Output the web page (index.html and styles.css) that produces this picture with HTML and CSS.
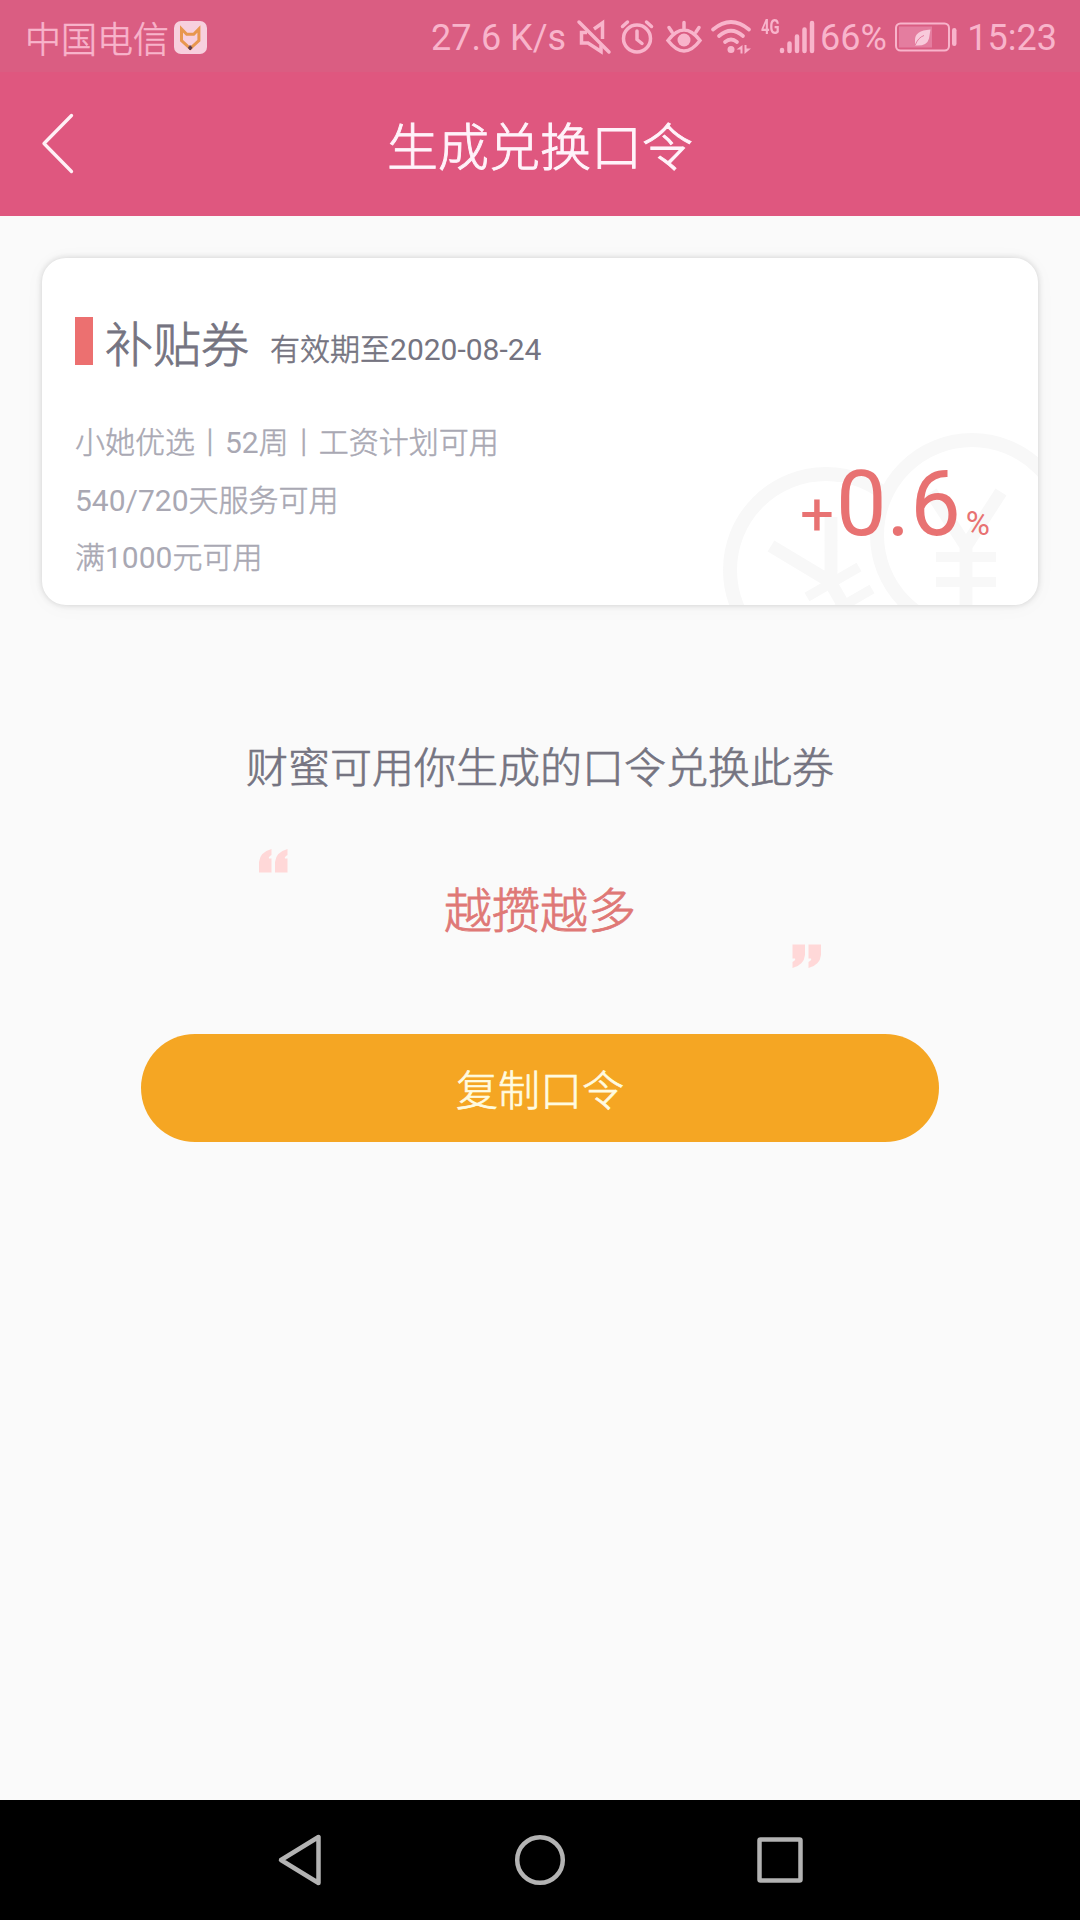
FILE: index.html
```html
<!DOCTYPE html>
<html lang="zh-CN">
<head>
<meta charset="utf-8">
<title>生成兑换口令</title>
<link rel="stylesheet" href="styles.css">
</head>
<body>
<div class="screen">
  <div class="status">
    <span class="carrier">中国电信</span>
    <svg class="fox" width="33" height="33" viewBox="0 0 33 33"><rect width="33" height="33" rx="7" fill="#f7d0de"/><path d="M7.500 8v11.500l8.700 8 8.700-8V8l-5.200 5.300h-7z" fill="none" stroke="#e8974f" stroke-width="3"/><path d="M16.200 24.500v4.500M14.200 26.800h4" stroke="#5b3d4c" stroke-width="2"/></svg>
    <span class="speed">27.6 K/s</span>
    <svg class="mute" width="34" height="34" viewBox="0 0 34 34" fill="none" stroke="#f8b4cb" stroke-width="3.500"><path d="M2 2l30 30" stroke-linecap="round"/><path d="M10 12.500H4.500v10.500H11l13 8.500V25M17 9l8.500-6v16"/></svg>
    <svg class="alarm" width="34" height="34" viewBox="0 0 34 34" fill="none" stroke="#f8b4cb" stroke-width="3.500" stroke-linecap="round"><circle cx="17" cy="18.500" r="13.500"/><path d="M17 11v8.500l5 4M2.500 6.500l5-4.500M31.500 6.500l-5-4.500"/></svg>
    <svg class="eye" width="36" height="34" viewBox="0 0 36 34" fill="none" stroke="#f8b4cb" stroke-width="3.500" stroke-linecap="round"><path d="M2 20.500q16-21 32 0q-16 21-32 0zM18 10V2.500M6 12L3 7.500M30 12l3-4.500"/><circle cx="18" cy="20" r="6.500" fill="#f8b4cb" stroke="none"/></svg>
    <svg class="wifi" width="41" height="34" viewBox="0 0 41 34" fill="none" stroke="#f8b4cb" stroke-width="3.700" stroke-linecap="round"><path d="M2 9.500q18-15 36 0M8 16q12-10.500 24 0M14 22q6-5 12 0"/><circle cx="20" cy="29.500" r="3.500" fill="#f8b4cb" stroke="none"/><path d="M25.500 29.500l6-4.500v8.500h-2v-4zM33.500 25h2v3.500H40L33.500 34z" fill="#f8b4cb" stroke="none"/></svg>
    <span class="net">4G</span>
    <svg class="signal" width="36" height="34" viewBox="0 0 36 34" stroke="#f8b4cb" stroke-width="4.500" stroke-linecap="round"><path d="M3 30v1M10.500 23.500V31M18 16.500V31M25.500 9.500V31M33 3V31"/></svg>
    <span class="percent">66%</span>
    <svg class="battery" width="62" height="30" viewBox="0 0 62 30"><rect x="1" y="1.500" width="53" height="27" rx="4.500" fill="none" stroke="#f8b4cb" stroke-width="2"/><rect x="4" y="4.500" width="33" height="21" fill="#e47d9f"/><path d="M35.500 7.500q-16 1-15.500 11v5q12 1 14-7z" fill="#f8cadb"/><path d="M20 23.500q3-8 9-10" stroke="#e47d9f" fill="none"/><rect x="57" y="6" width="4.500" height="18" rx="2.200" fill="#f8b4cb"/></svg>
    <span class="time">15:23</span>
  </div>
  <header class="header">
    <svg class="back" width="32" height="60" viewBox="0 0 32 60"><path d="M29.500 1.500L2 29.500l27.500 28" fill="none" stroke="#fff0f6" stroke-width="3.300" stroke-linecap="round" stroke-linejoin="round"/></svg>
    <h1 class="title">生成兑换口令</h1>
  </header>
  <main class="content">
    <section class="coupon">
      <svg class="coins" width="320" height="176" viewBox="0 0 320 176" fill="none" stroke="#f8f8f8" stroke-width="13">
        <mask id="behind"><rect width="320" height="240" fill="#fff"/><circle cx="254" cy="106" r="102" fill="#000"/></mask>
        <circle cx="108" cy="141" r="96" stroke-width="14" mask="url(#behind)"/>
        <circle cx="254" cy="106" r="95" stroke-width="14"/>
        <path d="M283 63l-35 54-35-54M248 114v66"/>
        <path d="M218 128h60M218 153h60" stroke-width="10"/>
        <path d="M53 117l60 36V88M111 151l19 33"/>
        <path d="M89 168l52-30M102 190l52-30" stroke-width="10"/>
      </svg>
      <div class="heading">
        <i class="marker"></i>
        <span class="name">补贴券</span>
        <span class="expiry">有效期至<span class="num">2020-08-24</span></span>
      </div>
      <div class="details">
        <ul class="terms">
          <li>小她优选丨<span class="num">52</span>周丨工资计划可用</li>
          <li><span class="num">540/720</span>天服务可用</li>
          <li>满<span class="num">1000</span>元可用</li>
        </ul>
        <div class="rate"><span class="plus">+</span><span class="value">0.6</span><span class="unit">%</span></div>
      </div>
    </section>
    <p class="hint">财蜜可用你生成的口令兑换此券</p>
    <div class="phrase">
      <svg class="quote open" width="29" height="24" viewBox="0 0 29 24" fill="#ffd8d8"><path d="M0 23.500V13Q1 3 12.500 0v6Q9 8 10 9.500h2.500v14z"/><path d="M16 23.500V13Q17 3 28.500 0v6Q25 8 26 9.500h2.500v14z"/></svg>
      <span class="words">越攒越多</span>
      <svg class="quote close" width="29" height="24" viewBox="0 0 29 24" fill="#ffd8d8"><path d="M0 23.500V13Q1 3 12.500 0v6Q9 8 10 9.500h2.500v14z"/><path d="M16 23.500V13Q17 3 28.500 0v6Q25 8 26 9.500h2.500v14z"/></svg>
    </div>
    <button class="copy">复制口令</button>
  </main>
  <nav class="nav">
    <svg width="52" height="52" viewBox="0 0 52 52"><path d="M44.500 3v46L7 26z"/></svg>
    <svg width="52" height="52" viewBox="0 0 52 52"><circle cx="26" cy="26" r="22.800"/></svg>
    <svg width="52" height="52" viewBox="0 0 52 52"><rect x="5.500" y="5.500" width="41" height="41" rx="1"/></svg>
  </nav>
</div>
</body>
</html>
```
FILE: styles.css
```css
* { box-sizing: border-box; margin: 0; padding: 0; }
body { width: 1080px; font-family: Roboto, "Noto Sans CJK SC", sans-serif; font-weight: 400; background: #fafafa; }
svg { display: block; flex: none; overflow: visible; }
.screen { height: 1920px; display: flex; flex-direction: column; overflow: hidden; }

.status { height: 72px; background: #da5d82; color: #f8b4cb; display: flex; align-items: center; font-size: 36px; line-height: 70px; white-space: nowrap; padding: 2px 24px 0 25px; }
.speed, .percent, .time { padding-top: 2px; }
.carrier { width: 144px; font-family: "Noto Sans CJK SC", sans-serif; font-weight: 300; -webkit-text-stroke: .6px; }
.fox { margin-left: 5px; }
.speed { width: 136px; margin-left: 224px; }
.mute { margin-left: 10px; }
.alarm { margin-left: 9px; }
.eye { margin-left: 12px; }
.wifi { margin-left: 9px; }
.net { width: 19px; margin-left: 9px; height: 50px; line-height: 50px; font-size: 20px; font-weight: 700; transform: scaleX(.74); transform-origin: left; align-self: flex-start; }
.signal { margin-left: -1px; }
.percent { width: 68px; margin-left: 5px; }
.battery { margin-left: 7px; }
.time { margin-left: auto; margin-right: -1px; }

.header { height: 144px; background: #df577f; display: grid; grid-template-columns: 200px 1fr 200px; align-items: center; }
.back { margin-left: 42px; }
.title { font-size: 51px; font-weight: 300; -webkit-text-stroke: .9px; line-height: 72px; padding-top: 10px; color: #fff3fa; text-align: center; }

.content { flex: 1; display: flex; flex-direction: column; align-items: center; padding-top: 42px; }
.coupon { position: relative; width: 996px; height: 347px; border-radius: 24px; background: #fff; box-shadow: 0 0 6px rgba(0, 0, 0, .16), 0 2px 22px rgba(0, 0, 0, .03); padding: 59px 0 0 33px; overflow: hidden; }
.coins { position: absolute; right: 0; bottom: 0; }
.heading { display: flex; height: 48px; color: #757481; position: relative; font-weight: 300; -webkit-text-stroke: .6px; }
.num { font-weight: 400; -webkit-text-stroke: 0; }
.marker { width: 18px; height: 48px; background: #ec7070; }
.name { font-size: 48px; line-height: 58px; margin-left: 12px; -webkit-text-stroke: .8px; }
.expiry { font-size: 30px; line-height: 66px; margin-left: 21px; }
.details { position: relative; display: flex; justify-content: space-between; }
.terms { list-style: none; margin-top: 49px; color: #a9a8b3; font-size: 30px; font-weight: 300; -webkit-text-stroke: .5px; line-height: 58px; }
.terms li:last-child { line-height: 56px; }
.rate { color: #e87272; display: flex; align-items: baseline; line-height: 106px; padding: 87px 48px 0 0; }
.plus { font-size: 60px; margin-right: 2px; }
.value { font-size: 90px; }
.unit { font-size: 33px; margin-left: 5px; }

.hint { margin-top: 134px; font-size: 42px; line-height: 60px; color: #757481; font-weight: 300; -webkit-text-stroke: .7px; }
.phrase { width: 563px; height: 119px; margin-top: 50px; display: flex; justify-content: space-between; }
.words { color: #df7876; font-size: 48px; font-weight: 300; -webkit-text-stroke: .8px; line-height: 126px; }
.close { align-self: flex-end; transform: rotate(180deg); }
.copy { margin-top: 66px; width: 798px; height: 108px; border: 0; border-radius: 54px; background: #f5a623; color: #fffbe0; font: 300 42px/60px Roboto, "Noto Sans CJK SC", sans-serif; padding-top: 8px; -webkit-text-stroke: .7px; }

.nav { height: 120px; background: #000; display: flex; justify-content: center; align-items: center; gap: 188px; }
.nav svg { fill: none; stroke: #b3b3b3; stroke-width: 4.5; stroke-linejoin: round; }
```
